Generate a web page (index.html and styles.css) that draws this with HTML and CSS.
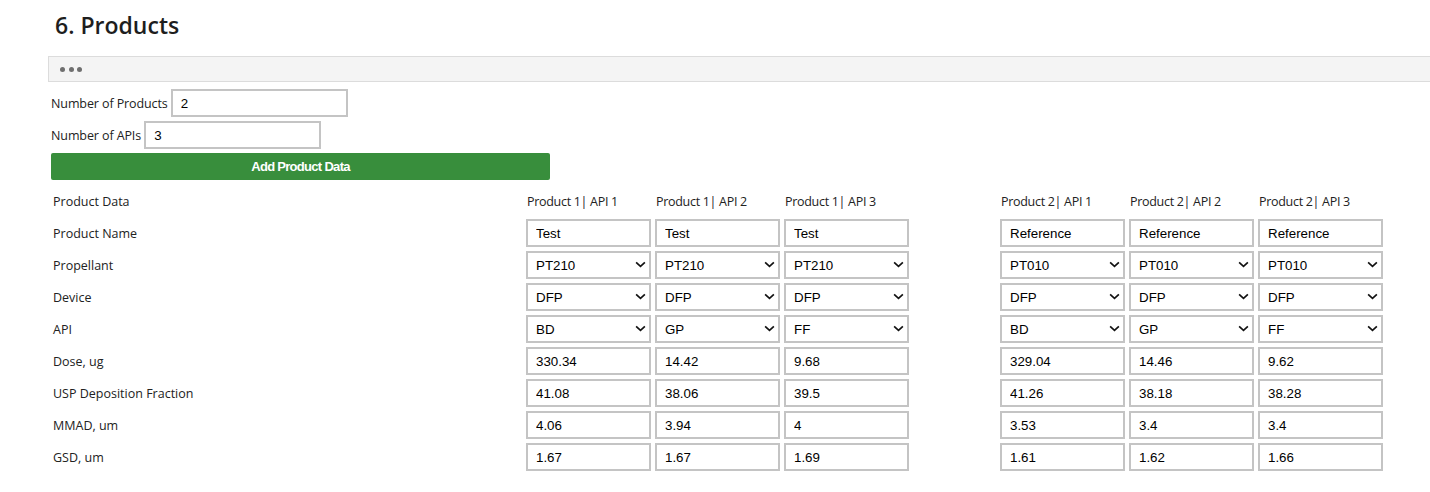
FILE: index.html
```html
<!DOCTYPE html>
<html lang="en">
<head>
<meta charset="utf-8">
<title>Products</title>
<link rel="stylesheet" href="styles.css">
</head>
<body>
<main class="page">
  <h2 class="title">6. Products</h2>
  <div class="toolbar"><span class="dot"></span><span class="dot"></span><span class="dot"></span></div>

  <div class="field field-first">
    <label class="field-label" for="np">Number of Products</label>
    <input class="num-input" id="np" type="text" value="2">
  </div>
  <div class="field">
    <label class="field-label" for="na">Number of APIs</label>
    <input class="num-input" id="na" type="text" value="3">
  </div>
  <button class="add-btn" type="button">Add Product Data</button>

  <div class="grid">
    <div class="cell label">Product Data</div>
    <div class="cell head">Product 1| API 1</div>
    <div class="cell head">Product 1| API 2</div>
    <div class="cell head">Product 1| API 3</div>
    <div class="cell spacer"></div>
    <div class="cell head">Product 2| API 1</div>
    <div class="cell head">Product 2| API 2</div>
    <div class="cell head">Product 2| API 3</div>

    <div class="cell label">Product Name</div>
    <div class="cell"><input class="box" type="text" value="Test"></div>
    <div class="cell"><input class="box" type="text" value="Test"></div>
    <div class="cell"><input class="box" type="text" value="Test"></div>
    <div class="cell spacer"></div>
    <div class="cell"><input class="box" type="text" value="Reference"></div>
    <div class="cell"><input class="box" type="text" value="Reference"></div>
    <div class="cell"><input class="box" type="text" value="Reference"></div>

    <div class="cell label">Propellant</div>
    <div class="cell"><div class="sel"><select class="box"><option>PT210</option></select><svg class="chev" viewBox="0 0 12 8"><path d="M1 1.5 L6 6.2 L11 1.5"/></svg></div></div>
    <div class="cell"><div class="sel"><select class="box"><option>PT210</option></select><svg class="chev" viewBox="0 0 12 8"><path d="M1 1.5 L6 6.2 L11 1.5"/></svg></div></div>
    <div class="cell"><div class="sel"><select class="box"><option>PT210</option></select><svg class="chev" viewBox="0 0 12 8"><path d="M1 1.5 L6 6.2 L11 1.5"/></svg></div></div>
    <div class="cell spacer"></div>
    <div class="cell"><div class="sel"><select class="box"><option>PT010</option></select><svg class="chev" viewBox="0 0 12 8"><path d="M1 1.5 L6 6.2 L11 1.5"/></svg></div></div>
    <div class="cell"><div class="sel"><select class="box"><option>PT010</option></select><svg class="chev" viewBox="0 0 12 8"><path d="M1 1.5 L6 6.2 L11 1.5"/></svg></div></div>
    <div class="cell"><div class="sel"><select class="box"><option>PT010</option></select><svg class="chev" viewBox="0 0 12 8"><path d="M1 1.5 L6 6.2 L11 1.5"/></svg></div></div>

    <div class="cell label">Device</div>
    <div class="cell"><div class="sel"><select class="box"><option>DFP</option></select><svg class="chev" viewBox="0 0 12 8"><path d="M1 1.5 L6 6.2 L11 1.5"/></svg></div></div>
    <div class="cell"><div class="sel"><select class="box"><option>DFP</option></select><svg class="chev" viewBox="0 0 12 8"><path d="M1 1.5 L6 6.2 L11 1.5"/></svg></div></div>
    <div class="cell"><div class="sel"><select class="box"><option>DFP</option></select><svg class="chev" viewBox="0 0 12 8"><path d="M1 1.5 L6 6.2 L11 1.5"/></svg></div></div>
    <div class="cell spacer"></div>
    <div class="cell"><div class="sel"><select class="box"><option>DFP</option></select><svg class="chev" viewBox="0 0 12 8"><path d="M1 1.5 L6 6.2 L11 1.5"/></svg></div></div>
    <div class="cell"><div class="sel"><select class="box"><option>DFP</option></select><svg class="chev" viewBox="0 0 12 8"><path d="M1 1.5 L6 6.2 L11 1.5"/></svg></div></div>
    <div class="cell"><div class="sel"><select class="box"><option>DFP</option></select><svg class="chev" viewBox="0 0 12 8"><path d="M1 1.5 L6 6.2 L11 1.5"/></svg></div></div>

    <div class="cell label">API</div>
    <div class="cell"><div class="sel"><select class="box"><option>BD</option></select><svg class="chev" viewBox="0 0 12 8"><path d="M1 1.5 L6 6.2 L11 1.5"/></svg></div></div>
    <div class="cell"><div class="sel"><select class="box"><option>GP</option></select><svg class="chev" viewBox="0 0 12 8"><path d="M1 1.5 L6 6.2 L11 1.5"/></svg></div></div>
    <div class="cell"><div class="sel"><select class="box"><option>FF</option></select><svg class="chev" viewBox="0 0 12 8"><path d="M1 1.5 L6 6.2 L11 1.5"/></svg></div></div>
    <div class="cell spacer"></div>
    <div class="cell"><div class="sel"><select class="box"><option>BD</option></select><svg class="chev" viewBox="0 0 12 8"><path d="M1 1.5 L6 6.2 L11 1.5"/></svg></div></div>
    <div class="cell"><div class="sel"><select class="box"><option>GP</option></select><svg class="chev" viewBox="0 0 12 8"><path d="M1 1.5 L6 6.2 L11 1.5"/></svg></div></div>
    <div class="cell"><div class="sel"><select class="box"><option>FF</option></select><svg class="chev" viewBox="0 0 12 8"><path d="M1 1.5 L6 6.2 L11 1.5"/></svg></div></div>

    <div class="cell label">Dose, ug</div>
    <div class="cell"><input class="box" type="text" value="330.34"></div>
    <div class="cell"><input class="box" type="text" value="14.42"></div>
    <div class="cell"><input class="box" type="text" value="9.68"></div>
    <div class="cell spacer"></div>
    <div class="cell"><input class="box" type="text" value="329.04"></div>
    <div class="cell"><input class="box" type="text" value="14.46"></div>
    <div class="cell"><input class="box" type="text" value="9.62"></div>

    <div class="cell label">USP Deposition Fraction</div>
    <div class="cell"><input class="box" type="text" value="41.08"></div>
    <div class="cell"><input class="box" type="text" value="38.06"></div>
    <div class="cell"><input class="box" type="text" value="39.5"></div>
    <div class="cell spacer"></div>
    <div class="cell"><input class="box" type="text" value="41.26"></div>
    <div class="cell"><input class="box" type="text" value="38.18"></div>
    <div class="cell"><input class="box" type="text" value="38.28"></div>

    <div class="cell label">MMAD, um</div>
    <div class="cell"><input class="box" type="text" value="4.06"></div>
    <div class="cell"><input class="box" type="text" value="3.94"></div>
    <div class="cell"><input class="box" type="text" value="4"></div>
    <div class="cell spacer"></div>
    <div class="cell"><input class="box" type="text" value="3.53"></div>
    <div class="cell"><input class="box" type="text" value="3.4"></div>
    <div class="cell"><input class="box" type="text" value="3.4"></div>

    <div class="cell label">GSD, um</div>
    <div class="cell"><input class="box" type="text" value="1.67"></div>
    <div class="cell"><input class="box" type="text" value="1.67"></div>
    <div class="cell"><input class="box" type="text" value="1.69"></div>
    <div class="cell spacer"></div>
    <div class="cell"><input class="box" type="text" value="1.61"></div>
    <div class="cell"><input class="box" type="text" value="1.62"></div>
    <div class="cell"><input class="box" type="text" value="1.66"></div>
  </div>
</main>
</body>
</html>
```

FILE: styles.css
```css
html, body {
  margin: 0;
  padding: 0;
  background: #ffffff;
  overflow: hidden;
}

body {
  font-family: "Open Sans", "Noto Sans", Arial, sans-serif;
  font-size: 12.5px;
  color: #222222;
}

.page {
  padding-left: 51px;
}

.title {
  margin: 0;
  padding: 9px 0 0 4px;
  height: 56px;
  box-sizing: border-box;
  font-family: "Open Sans", "Noto Sans", sans-serif;
  font-weight: 600;
  font-size: 23px;
  line-height: 32px;
  color: #1e1e1e;
}

.toolbar {
  margin-left: -3px;
  height: 26px;
  box-sizing: border-box;
  background: #f4f4f4;
  border: 1px solid #dcdcdc;
  border-right: none;
  display: flex;
  align-items: center;
  gap: 3.5px;
  padding-left: 11px;
}

.dot {
  width: 5px;
  height: 5px;
  border-radius: 50%;
  background: #6f6f6f;
}

.field {
  display: flex;
  align-items: center;
  gap: 3px;
  margin-top: 4px;
  height: 28px;
}

.field-first {
  margin-top: 7px;
}

.field-label {
  color: #222222;
  letter-spacing: -0.1px;
}

.num-input {
  width: 177px;
  height: 28px;
  box-sizing: border-box;
  border: 2px solid #c4c4c4;
  padding: 0 0 0 8px;
  margin: 0;
  font-family: "Liberation Sans", Arial, sans-serif;
  font-size: 13.333px;
  color: #000000;
  background: #ffffff;
  outline: none;
}

.add-btn {
  display: block;
  margin-top: 4px;
  width: 499px;
  height: 27px;
  border: none;
  border-radius: 2px;
  background: #388e3c;
  color: #ffffff;
  font-family: "Liberation Sans", Arial, sans-serif;
  font-weight: bold;
  font-size: 13px;
  letter-spacing: -0.7px;
  padding: 0;
  cursor: pointer;
}

.grid {
  margin-top: 5px;
  display: grid;
  grid-template-columns: 473px repeat(3, 129px) 87px repeat(3, 129px);
  grid-auto-rows: 32px;
}

.cell {
  padding: 2px;
  display: flex;
  align-items: center;
  box-sizing: border-box;
}

.label {
  color: #222222;
}

.head {
  padding-left: 3px;
  color: #222222;
  letter-spacing: -0.3px;
}

.box {
  width: 125px;
  height: 28px;
  box-sizing: border-box;
  border: 2px solid #c4c4c4;
  border-radius: 0;
  padding: 0 0 0 8px;
  margin: 0;
  font-family: "Liberation Sans", Arial, sans-serif;
  font-size: 13.333px;
  color: #000000;
  background: #ffffff;
  outline: none;
}

select.box {
  -webkit-appearance: none;
  appearance: none;
  padding-left: 8px;
}

.sel {
  position: relative;
  width: 125px;
  height: 28px;
}

.chev {
  position: absolute;
  right: 5px;
  top: 10px;
  width: 11px;
  height: 7px;
  pointer-events: none;
}

.chev path {
  fill: none;
  stroke: #111111;
  stroke-width: 1.9;
}
```
